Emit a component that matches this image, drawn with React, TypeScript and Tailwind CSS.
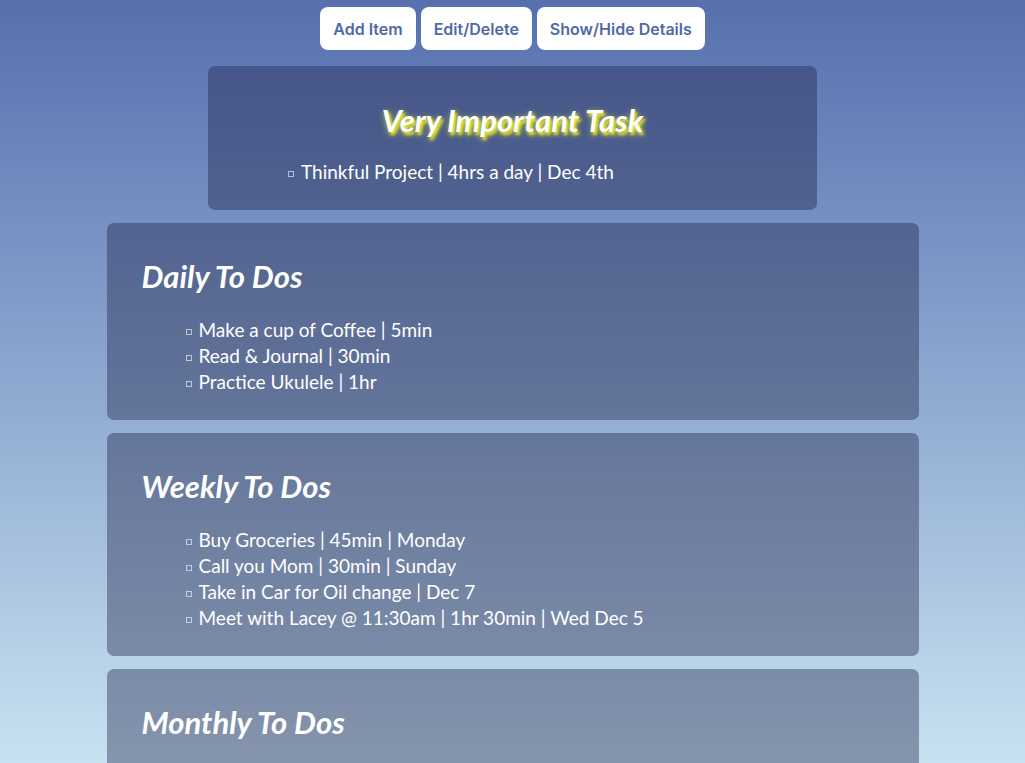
import React from "react";

const important = ["Thinkful Project | 4hrs a day | Dec 4th"];

const sections = [
  {
    title: "Daily To Dos",
    items: [
      "Make a cup of Coffee | 5min",
      "Read & Journal | 30min",
      "Practice Ukulele | 1hr",
    ],
  },
  {
    title: "Weekly To Dos",
    items: [
      "Buy Groceries | 45min | Monday",
      "Call you Mom | 30min | Sunday",
      "Take in Car for Oil change | Dec 7",
      "Meet with Lacey @ 11:30am | 1hr 30min | Wed Dec 5",
    ],
  },
  {
    title: "Monthly To Dos",
    items: [] as string[],
  },
];

const Item = ({ text }: { text: string }) => (
  <li className="flex items-center h-[26px]">
    <span className="inline-block w-[6px] h-[6px] border border-white/60 mr-[7px] mt-[4px]" />
    <span>{text}</span>
  </li>
);

const App = () => {
  return (
    <div className="min-h-screen bg-fixed bg-gradient-to-b from-[#5670ae] to-[#c9e2f1] font-['Lato','Noto_Sans',sans-serif] text-white pb-10">
      <div className="flex justify-center gap-[5px] pt-[7px]">
        {["Add Item", "Edit/Delete", "Show/Hide Details"].map((b) => (
          <button
            key={b}
            className="bg-white rounded-[8px] h-[43px] px-[13px] text-[16px] font-semibold text-[#4f69a7] font-['Inter',sans-serif]">
            {b}
          </button>
        ))}
      </div>

      <div className="w-[609px] mx-auto mt-[16px] rounded-[7px] bg-[rgba(30,32,70,0.4)] pt-[33px] pb-[25px]">
        <h1 className="text-center text-[31px] leading-[42px] font-bold italic [text-shadow:2px_3px_3px_#e3e62c,1px_2px_6px_#d8dc30]">
          Very Important Task
        </h1>
        <ul className="mt-[18px] pl-[80px] text-[19px]">
          {important.map((t) => (
            <Item key={t} text={t} />
          ))}
        </ul>
      </div>

      <div className="w-[812px] mx-auto">
        {sections.map((s) => (
          <div
            key={s.title}
            className="mt-[13px] rounded-[7px] bg-[rgba(30,32,70,0.4)] px-[35px] pt-[32px] pb-[25px]">
            <h2 className="text-[31px] leading-[42px] font-bold italic">{s.title}</h2>
            <ul className="mt-[20px] pl-[44px] text-[19px] min-h-[78px]">
              {s.items.map((t) => (
                <Item key={t} text={t} />
              ))}
            </ul>
          </div>
        ))}
      </div>
    </div>
  );
};

export default App;
